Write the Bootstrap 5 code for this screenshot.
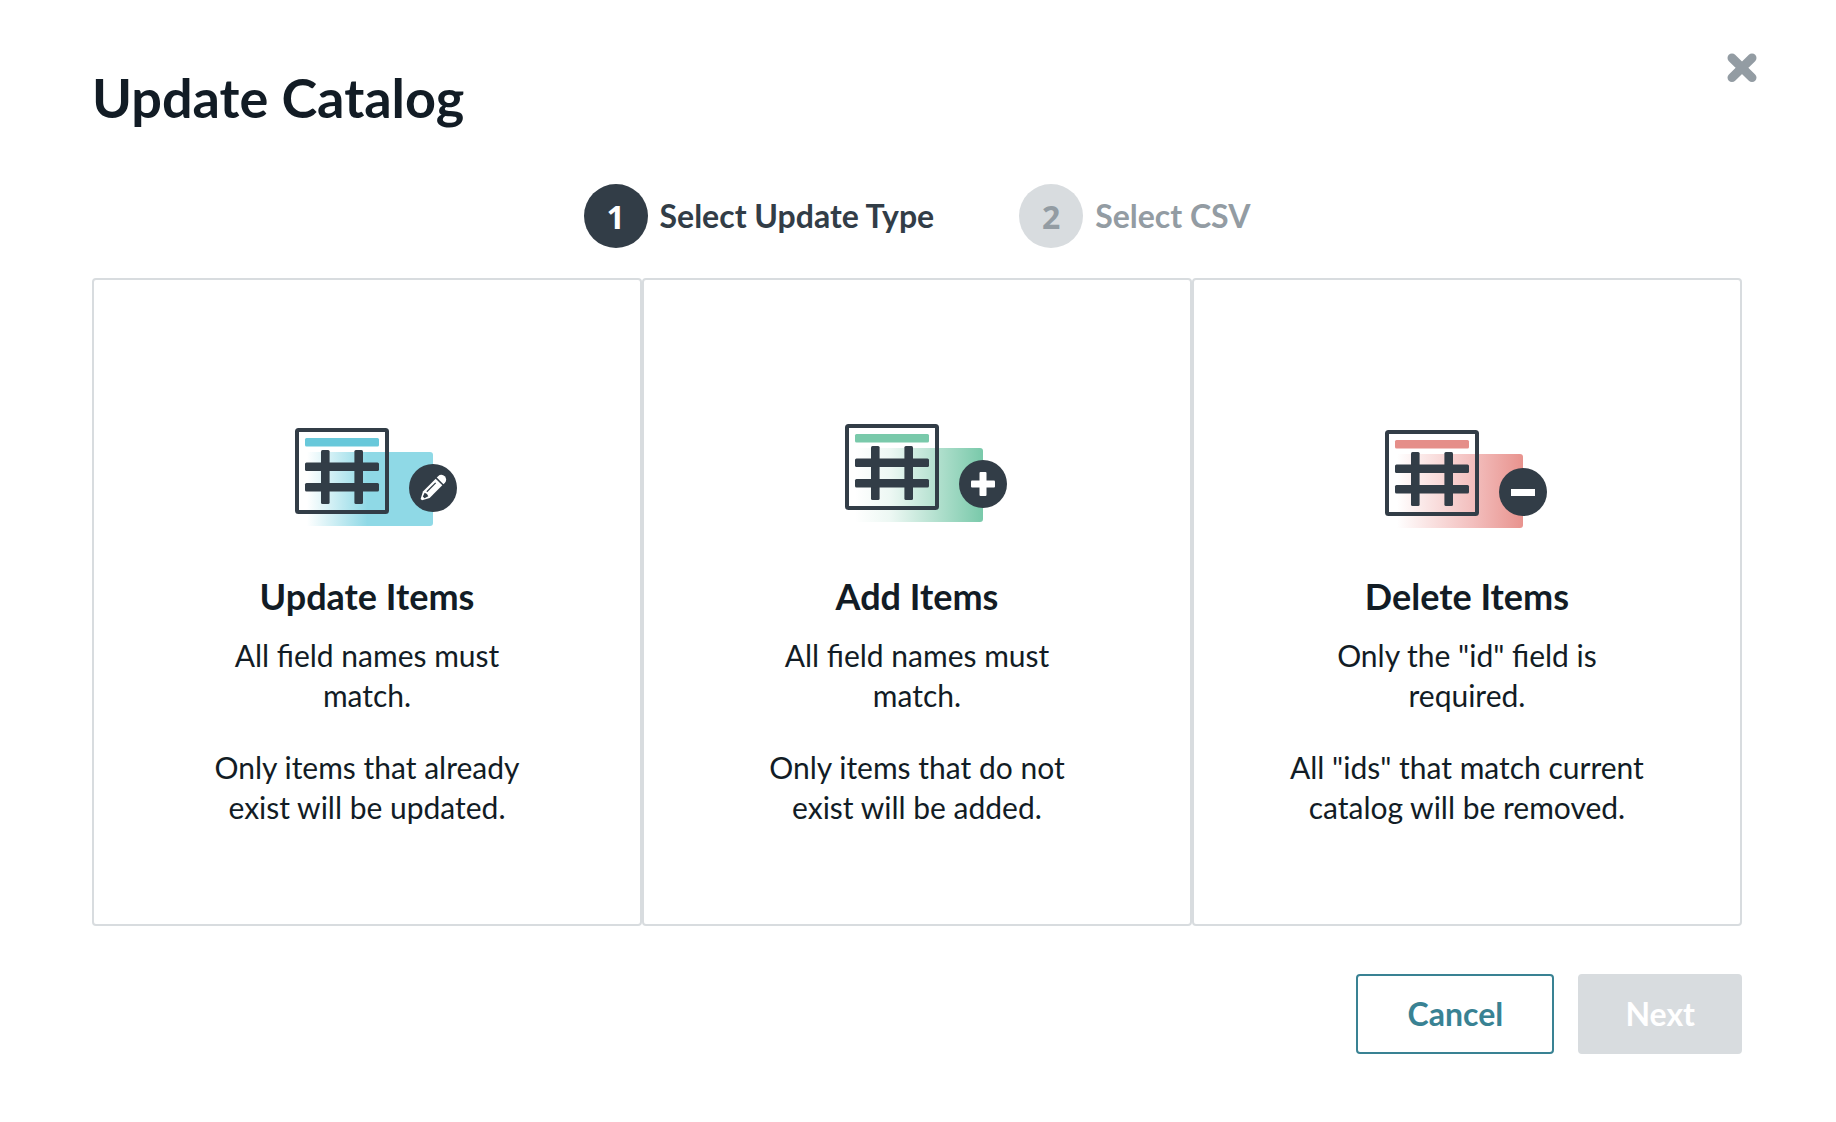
<!DOCTYPE html>
<html lang="en">
<head>
<meta charset="utf-8">
<meta name="viewport" content="width=device-width, initial-scale=1">
<title>Update Catalog</title>
<link rel="stylesheet" href="https://cdn.jsdelivr.net/npm/bootstrap@5.3.0/dist/css/bootstrap.min.css">
<style>
:root{--ink:#121c25;--slate:#323d47;--muted-ink:#939ca3;--line:#d8dcdf;--teal:#398293}
body{font-family:Lato,"Liberation Sans",sans-serif;color:var(--ink);font-size:30px;line-height:40px;background:#fff}
.dialog-pane{padding:54px 94px 64px 92px}
.dialog-title{font-size:54px;line-height:88px;font-weight:700}
.close-btn{top:46px;right:72px;padding:7px;line-height:0;border:0;background:none}
.close-btn svg{display:block}
.steps{gap:85px;margin-top:42px;margin-bottom:30px;padding:0}
.step{gap:12px;font-size:32px;font-weight:700;color:var(--muted-ink)}
.step-num{width:64px;height:64px;background:var(--line);font-family:"Noto Sans",sans-serif;font-size:32px;line-height:66px}
.step.current{color:var(--slate)}
.step.current .step-num{background:var(--slate);color:#fff}
.option{border:2px solid var(--line);border-radius:4px;min-height:648px;padding:144px 92px 80px;background:#fff;color:var(--ink);text-align:center}
.option h2{font-size:36px;line-height:40px;font-weight:700;margin:48px 0 19px}
.option p{margin-bottom:32px}
.option .copy{max-width:360px}
.foot{gap:24px;margin-top:48px}
.foot .btn{font-size:32px;line-height:40px;font-weight:700;border-width:2px;border-radius:4px;padding:18px 45px}
.foot .btn-cancel{min-width:198px}
.btn-cancel{color:var(--teal);border-color:var(--teal);background:#fff}
.btn-cancel:hover{color:#fff;background:var(--teal)}
.btn-next:disabled{color:#fff;background:var(--line);border-color:var(--line);opacity:1}
</style>
<script src="https://cdn.jsdelivr.net/npm/bootstrap@5.3.0/dist/js/bootstrap.bundle.min.js"></script>
</head>
<body>
<svg width="0" height="0" class="position-absolute" aria-hidden="true">
  <defs>
    <linearGradient id="gBlue"><stop offset="0" stop-color="#8fd9e6" stop-opacity="0"/><stop offset=".48" stop-color="#8fd9e6"/></linearGradient>
    <linearGradient id="gGreen"><stop offset="0" stop-color="#79c9aa" stop-opacity="0"/><stop offset=".28" stop-color="#79c9aa" stop-opacity=".14"/><stop offset="1" stop-color="#79c9aa"/></linearGradient>
    <linearGradient id="gRed"><stop offset="0" stop-color="#f3bcbb" stop-opacity="0"/><stop offset=".6" stop-color="#f3bfbe"/><stop offset="1" stop-color="#e8938e"/></linearGradient>
    <g id="sheet" fill="#323d47">
      <rect x="2" y="2" width="90" height="82" rx="1.5" fill="none" stroke="#323d47" stroke-width="4"/>
      <rect x="26" y="22" width="8.6" height="54" rx="1.5"/><rect x="59.4" y="22" width="8.6" height="54" rx="1.5"/>
      <rect x="10" y="34.4" width="74" height="8.6" rx="1.5"/><rect x="10" y="55" width="74" height="8.4" rx="1.5"/>
    </g>
  </defs>
</svg>
<main class="dialog-pane position-relative">
  <button type="button" class="close-btn position-absolute" aria-label="Close">
    <svg width="30" height="30" viewBox="0 0 30 30"><path d="M5 5L25 24.600M25 5L5 24.600" stroke="#939ca3" stroke-width="9" stroke-linecap="round"/></svg>
  </button>
  <h1 class="dialog-title m-0">Update Catalog</h1>
  <ol class="steps list-unstyled d-flex justify-content-center">
    <li class="step current d-flex align-items-center" aria-current="step"><span class="step-num rounded-circle text-center">1</span><span>Select Update Type</span></li>
    <li class="step d-flex align-items-center"><span class="step-num rounded-circle text-center">2</span><span>Select CSV</span></li>
  </ol>
  <div class="row g-0">
    <div class="col-4">
      <button type="button" class="option w-100 h-100 d-flex flex-column align-items-center">
        <svg width="180" height="104" viewBox="-18 -4 180 104" aria-hidden="true">
          <path d="M12 24H135a3 3 0 0 1 3 3V95a3 3 0 0 1-3 3H12z" fill="url(#gBlue)"/>
          <use href="#sheet"/><rect x="10" y="10" width="74" height="8.4" rx="1.500" fill="#68c8da"/>
          <circle cx="138" cy="60" r="24" fill="#323d47"/>
          <g transform="translate(138 60) rotate(45)" fill="#fff">
            <path d="M-4.700-8.500h9.400V9.500L1 16.500h-2L-4.700 9.500z"/><path d="M-4.700-10v-2.300a4.700 4.200 0 0 1 9.400 0v2.300z"/>
            <path d="M-2.400-5.500h1.300V7h-1.300z" fill="#323d47"/><path d="M-2.600 9.200q2.600-1.400 5.200 0L1.200 13.200h-2.400z" fill="#323d47"/>
          </g>
        </svg>
        <h2>Update Items</h2>
        <div class="copy"><p>All field names must match.</p><p class="mb-0">Only items that already exist will be updated.</p></div>
      </button>
    </div>
    <div class="col-4">
      <button type="button" class="option w-100 h-100 d-flex flex-column align-items-center">
        <svg width="180" height="104" viewBox="-18 0 180 104" aria-hidden="true">
          <path d="M10 24H135a3 3 0 0 1 3 3V95a3 3 0 0 1-3 3H10z" fill="url(#gGreen)"/>
          <use href="#sheet"/><rect x="10" y="10" width="74" height="8.600" rx="1.500" fill="#79c9aa"/>
          <circle cx="138" cy="60" r="24" fill="#323d47"/>
          <rect x="126" y="56.500" width="24" height="7" rx="1" fill="#fff"/><rect x="134.500" y="48" width="7" height="24" rx="1" fill="#fff"/>
        </svg>
        <h2>Add Items</h2>
        <div class="copy"><p>All field names must match.</p><p class="mb-0">Only items that do not exist will be added.</p></div>
      </button>
    </div>
    <div class="col-4">
      <button type="button" class="option w-100 h-100 d-flex flex-column align-items-center">
        <svg width="164" height="104" viewBox="0 -6 164 104" aria-hidden="true">
          <path d="M12 24H135a3 3 0 0 1 3 3V95a3 3 0 0 1-3 3H12z" fill="url(#gRed)"/>
          <use href="#sheet"/><rect x="10" y="10" width="74" height="8.400" rx="1.500" fill="#e58e89"/>
          <circle cx="138" cy="62" r="24" fill="#323d47"/>
          <path d="M126 62.500h24" stroke="#fff" stroke-width="7"/>
        </svg>
        <h2>Delete Items</h2>
        <div class="copy"><p>Only the "id" field is required.</p><p class="mb-0">All "ids" that match current catalog will be removed.</p></div>
      </button>
    </div>
  </div>
  <div class="foot d-flex justify-content-end">
    <button type="button" class="btn btn-cancel">Cancel</button>
    <button type="button" class="btn btn-next" disabled>Next</button>
  </div>
</main>
</body>
</html>
